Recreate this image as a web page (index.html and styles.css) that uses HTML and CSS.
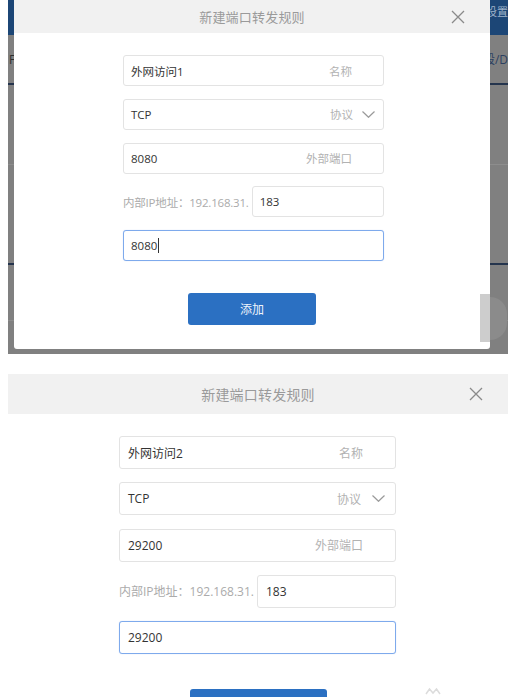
FILE: index.html
```html
<!DOCTYPE html>
<html lang="zh">
<head>
<meta charset="utf-8">
<title>新建端口转发规则</title>
<link rel="stylesheet" href="styles.css">
</head>
<body>
<section class="shot shot-top">
  <div class="bgpage">
    <div class="bg-bar"><span class="bg-bar-text">设置</span></div>
    <div class="bg-tabs"><span class="bg-l">F</span><span class="bg-r">段/D</span></div>
    <div class="bg-row bg-row2"></div>
    <div class="bg-row bg-row3"></div>
    <div class="bg-row bg-row4"></div>
  </div>
  <div class="dialog dialog-a">
    <header class="dlg-head">
      <h2 class="dlg-title">新建端口转发规则</h2>
      <button class="dlg-close" type="button" aria-label="关闭">
        <svg viewBox="0 0 14 14" width="14" height="14"><path d="M1 1 L13 13 M13 1 L1 13" fill="none" stroke="#8a8a8a" stroke-width="1.3"/></svg>
      </button>
    </header>
    <div class="dlg-form">
      <div class="field"><span class="val">外网访问1</span><span class="hint">名称</span></div>
      <div class="field field-select"><span class="val">TCP</span><span class="hint">协议</span>
        <svg class="chev" viewBox="0 0 13 7" width="13" height="7"><polyline points="0.5,0.5 6.5,6.3 12.5,0.5" fill="none" stroke="#9a9a9a" stroke-width="1.2"/></svg>
      </div>
      <div class="field"><span class="val">8080</span><span class="hint">外部端口</span></div>
      <div class="ip-row"><span class="ip-label">内部IP地址：192.168.31.</span><div class="field ip-input"><span class="val">183</span></div></div>
      <div class="field field-focus"><span class="val">8080<span class="caret"></span></span></div>
    </div>
    <button class="dlg-btn" type="button">添加</button>
  </div>
  <div class="wm-bar"></div>
  <div class="wm-tab"></div>
</section>

<section class="shot shot-bottom">
  <div class="dialog dialog-b">
    <header class="dlg-head">
      <h2 class="dlg-title">新建端口转发规则</h2>
      <button class="dlg-close" type="button" aria-label="关闭">
        <svg viewBox="0 0 14 14" width="14" height="14"><path d="M1 1 L13 13 M13 1 L1 13" fill="none" stroke="#8a8a8a" stroke-width="1.3"/></svg>
      </button>
    </header>
    <div class="dlg-form">
      <div class="field"><span class="val">外网访问2</span><span class="hint">名称</span></div>
      <div class="field field-select"><span class="val">TCP</span><span class="hint">协议</span>
        <svg class="chev" viewBox="0 0 13 7" width="13" height="7"><polyline points="0.5,0.5 6.5,6.3 12.5,0.5" fill="none" stroke="#9a9a9a" stroke-width="1.2"/></svg>
      </div>
      <div class="field"><span class="val">29200</span><span class="hint">外部端口</span></div>
      <div class="ip-row"><span class="ip-label">内部IP地址：192.168.31.</span><div class="field ip-input"><span class="val">183</span></div></div>
      <div class="field field-focus"><span class="val">29200</span></div>
    </div>
    <button class="dlg-btn" type="button">添加</button>
  </div>
  <svg class="wm-mark" viewBox="0 0 18 8" width="18" height="8"><polyline points="1,7 4.5,2 8,6 11.5,2 15,7" fill="none" stroke="#dcdcdc" stroke-width="1.5"/></svg>
</section>
</body>
</html>
```

FILE: styles.css
```css
* {
  box-sizing: border-box;
  margin: 0;
  padding: 0;
}

html,
body {
  overflow: hidden;
}

body {
  width: 517px;
  height: 697px;
  background: #ffffff;
  font-family: "Open Sans", "Noto Sans CJK SC", sans-serif;
  color: #333333;
}

.shot {
  position: relative;
  width: 500px;
  margin-left: 8px;
  overflow: hidden;
}

.shot-top {
  height: 354px;
  margin-bottom: 20px;
  background: #808080;
}

.shot-bottom {
  height: 323px;
  background: #ffffff;
}

/* background page seen behind the modal */
.bg-bar {
  height: 35px;
  background: #1c4676;
  display: flex;
  justify-content: flex-end;
  padding-top: 3px;
}

.bg-bar-text {
  font-size: 11px;
  color: #9fb2c9;
}

.bg-tabs {
  height: 50px;
  border-bottom: 2px solid #24344d;
  display: flex;
  justify-content: space-between;
  align-items: center;
  font-size: 12px;
}

.bg-l {
  color: #2f2f2f;
  padding-left: 1px;
}

.bg-r {
  color: #2d4060;
}

.bg-row2 {
  height: 80px;
  border-bottom: 1px solid #8d8d8d;
}

.bg-row3 {
  height: 100px;
  border-bottom: 2px solid #24344d;
}

.bg-row4 {
  height: 56px;
  border-bottom: 1px solid #8d8d8d;
}

/* dialogs */
.dialog {
  background: #ffffff;
  display: flex;
  flex-direction: column;
}

.dialog-a {
  position: absolute;
  top: 0;
  left: 6px;
  width: 476px;
  height: 349px;
  border-radius: 0 0 3px 3px;
  --hh: 33px;
  --title: 13px;
  --fs: 11.5px;
  --ls: -0.2px;
  --ft: 22px;
  --fl: 109px;
  --fw: 261px;
  --fh: 31px;
  --gap: 12.75px;
  --pl: 7px;
  --pr: 31px;
  --pr2: 8px;
  --cg: 9px;
  --ipgap: 3px;
  --bt: 32px;
  --bw: 128px;
  --bh: 32px;
}

.dialog-b {
  width: 500px;
  height: 323px;
  --hh: 40px;
  --title: 14px;
  --fs: 12px;
  --ls: 0px;
  --ft: 22px;
  --fl: 111px;
  --fw: 277px;
  --fh: 33px;
  --gap: 13.25px;
  --pl: 8px;
  --pr: 32px;
  --pr2: 10px;
  --cg: 11px;
  --ipgap: 3px;
  --bt: 35px;
  --bw: 137px;
  --bh: 34px;
}

.dlg-head {
  height: var(--hh);
  flex: none;
  background: #f1f1f1;
  display: grid;
  grid-template-columns: 1fr auto 1fr;
  align-items: center;
}

.dlg-title {
  grid-column: 2;
  font-size: var(--title);
  font-weight: normal;
  color: #9a9a9a;
  letter-spacing: 0.2px;
}

.dlg-close {
  grid-column: 3;
  justify-self: end;
  margin-right: 25px;
  width: 14px;
  height: 14px;
  border: none;
  background: none;
  display: flex;
}

.dlg-form {
  width: var(--fw);
  margin: var(--ft) 0 0 var(--fl);
  display: flex;
  flex-direction: column;
  gap: var(--gap);
}

.field {
  height: var(--fh);
  border: 1px solid #e3e3e3;
  border-radius: 3px;
  display: flex;
  align-items: center;
  padding: 0 var(--pr) 0 var(--pl);
  font-size: var(--fs);
  color: #333333;
  background: #ffffff;
}

.val {
  flex: 1;
  display: flex;
  align-items: center;
  white-space: nowrap;
}

.hint {
  color: #b2b2b2;
}

.field-select {
  padding-right: var(--pr2);
}

.chev {
  margin-left: var(--cg);
  flex: none;
}

.ip-row {
  display: flex;
  align-items: center;
  gap: var(--ipgap);
}

.ip-label {
  font-size: var(--fs);
  letter-spacing: var(--ls);
  color: #ababab;
  white-space: nowrap;
}

.ip-input {
  flex: 1;
}

.field-focus {
  border-color: #7eaaec;
  box-shadow: 0 0 1px rgba(90, 140, 230, 0.4);
}

.caret {
  display: inline-block;
  width: 1px;
  height: 15px;
  background: #333333;
  margin-left: 1px;
}

.dlg-btn {
  width: var(--bw);
  height: var(--bh);
  flex: none;
  margin: var(--bt) auto 0;
  border: none;
  border-radius: 3px;
  background: #2b70c2;
  color: #eef4fb;
  font-family: "Open Sans", "Noto Sans CJK SC", sans-serif;
  font-size: 12px;
}

/* watermark artifacts lying over the screenshot */
.wm-bar {
  position: absolute;
  left: 472px;
  top: 294px;
  width: 10px;
  height: 48px;
  background: #cdcdcd;
}

.wm-tab {
  position: absolute;
  left: 482px;
  top: 297px;
  width: 17px;
  height: 43px;
  background: #8b8b8b;
  border-radius: 0 22px 22px 0;
}

.wm-mark {
  position: absolute;
  left: 417px;
  top: 313px;
}
```
